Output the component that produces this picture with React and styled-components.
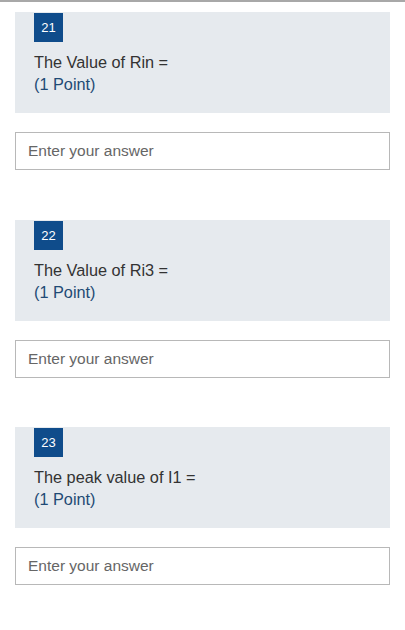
import React from 'react'
import styled, { createGlobalStyle } from 'styled-components'

const GlobalStyle = createGlobalStyle`
  body {
    margin: 0;
    background: #ffffff;
    font-family: 'Liberation Sans', Arial, sans-serif;
  }
`

const Page = styled.div`
  border-top: 2px solid #a8a8a8;
  padding: 10px 15px 0;
  height: 628px;
  overflow: hidden;
  box-sizing: border-box;
`

const Question = styled.section`
  margin-bottom: 49.5px;
`

const Card = styled.div`
  background: #e6eaee;
  padding: 1px 19px 18px;
`

const Badge = styled.div`
  width: 29px;
  height: 29px;
  background: #0f4c8b;
  color: #ffffff;
  font-size: 13px;
  display: flex;
  align-items: center;
  justify-content: center;
`

const Title = styled.div`
  margin-top: 9px;
  font-size: 16.3px;
  line-height: 22px;
  color: #333333;
`

const Points = styled.div`
  font-size: 16.3px;
  line-height: 22px;
  color: #1f4a75;
`

const AnswerInput = styled.input`
  display: block;
  width: 100%;
  box-sizing: border-box;
  margin-top: 19px;
  height: 38px;
  border: 1px solid #b8b8b8;
  padding: 0 12px;
  font-family: 'Liberation Sans', Arial, sans-serif;
  font-size: 15.5px;
  color: #333;
  background: #fff;
  outline: none;

  &::placeholder {
    color: #666666;
  }
`

const questions = [
  { num: 21, text: 'The Value of Rin =' },
  { num: 22, text: 'The Value of Ri3 =' },
  { num: 23, text: 'The peak value of I1 =' }
]

export default function App() {
  return (
    <>
      <GlobalStyle />
      <Page>
        {questions.map(q => (
          <Question key={q.num}>
            <Card>
              <Badge>{q.num}</Badge>
              <Title>{q.text}</Title>
              <Points>(1 Point)</Points>
            </Card>
            <AnswerInput placeholder='Enter your answer' />
          </Question>
        ))}
      </Page>
    </>
  )
}
